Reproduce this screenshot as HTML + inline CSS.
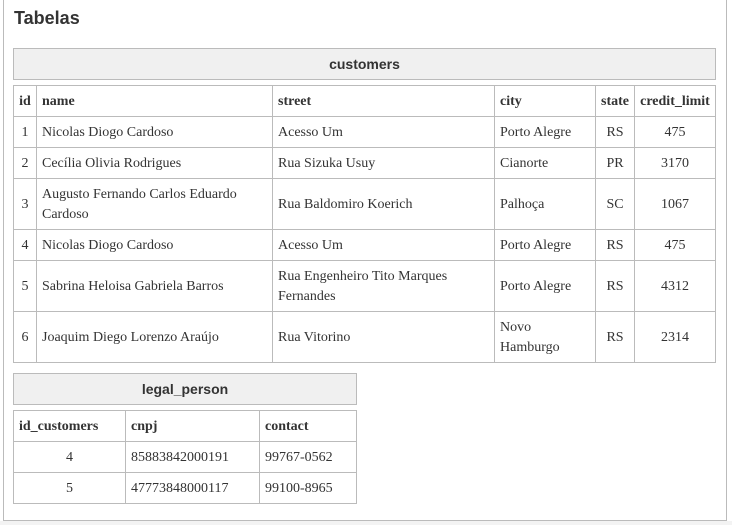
<!DOCTYPE html>
<html><head><meta charset="utf-8"><style>
html,body{margin:0;padding:0;background:#fff;width:732px;height:525px;overflow:hidden}
.frame{position:absolute;left:3px;top:-2px;width:722px;height:522px;border:1px solid #bbb;border-top:none}
.bot{position:absolute;left:0;top:521px;width:732px;height:4px;background:#f3f3f3}
h1{position:absolute;left:14px;top:8px;margin:0;font:bold 18px "Liberation Sans",sans-serif;color:#333}
.cap{position:absolute;background:#f0f0f0;border:1px solid #bbb;box-sizing:border-box;font:bold 14px "Liberation Sans",sans-serif;color:#333;text-align:center}
table{position:absolute;border-collapse:collapse;font:14px/20px "Liberation Serif",serif;color:#333;table-layout:fixed}
td,th{border:1px solid #bbb;padding:2px 5px 0;text-align:left;vertical-align:middle}
th{font-weight:bold}
.c{text-align:center}
</style></head><body>
<div class="frame"></div><div class="bot"></div>
<h1>Tabelas</h1>
<div class="cap" style="left:13px;top:48px;width:703px;height:32px;line-height:30px">customers</div>
<table style="left:13px;top:85px;width:702px">
<colgroup><col style="width:23px"><col style="width:236px"><col style="width:222px"><col style="width:101px"><col style="width:39px"><col style="width:81px"></colgroup>
<tr style="height:31px"><th class="c" style="padding:2px 0 0">id</th><th>name</th><th>street</th><th>city</th><th class="c" style="padding:2px 0 0">state</th><th class="c" style="padding:2px 0 0">credit_limit</th></tr>
<tr style="height:31px"><td class="c">1</td><td>Nicolas Diogo Cardoso</td><td>Acesso Um</td><td>Porto Alegre</td><td class="c">RS</td><td class="c">475</td></tr>
<tr style="height:31px"><td class="c">2</td><td>Cecília Olivia Rodrigues</td><td>Rua Sizuka Usuy</td><td>Cianorte</td><td class="c">PR</td><td class="c">3170</td></tr>
<tr style="height:51px"><td class="c">3</td><td>Augusto Fernando Carlos Eduardo Cardoso</td><td>Rua Baldomiro Koerich</td><td>Palhoça</td><td class="c">SC</td><td class="c">1067</td></tr>
<tr style="height:31px"><td class="c">4</td><td>Nicolas Diogo Cardoso</td><td>Acesso Um</td><td>Porto Alegre</td><td class="c">RS</td><td class="c">475</td></tr>
<tr style="height:51px"><td class="c">5</td><td>Sabrina Heloisa Gabriela Barros</td><td>Rua Engenheiro Tito Marques Fernandes</td><td>Porto Alegre</td><td class="c">RS</td><td class="c">4312</td></tr>
<tr style="height:51px"><td class="c">6</td><td>Joaquim Diego Lorenzo Araújo</td><td>Rua Vitorino</td><td>Novo Hamburgo</td><td class="c">RS</td><td class="c">2314</td></tr>
</table>
<div class="cap" style="left:13px;top:373px;width:344px;height:32px;line-height:30px">legal_person</div>
<table style="left:13px;top:410px;width:343px">
<colgroup><col style="width:112px"><col style="width:134px"><col style="width:97px"></colgroup>
<tr style="height:31px"><th>id_customers</th><th>cnpj</th><th>contact</th></tr>
<tr style="height:31px"><td class="c">4</td><td>85883842000191</td><td>99767-0562</td></tr>
<tr style="height:31px"><td class="c">5</td><td>47773848000117</td><td>99100-8965</td></tr>
</table>
</body></html>
